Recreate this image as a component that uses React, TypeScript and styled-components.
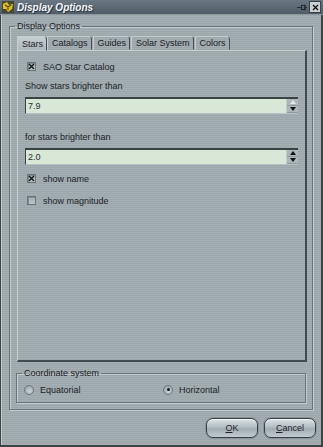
import React from "react";
import styled, { createGlobalStyle } from "styled-components";

const GlobalStyle = createGlobalStyle`
  html, body { margin: 0; padding: 0; background: #9ba6ac; }
  #root { width: 323px; height: 447px; }
`;

const stripes =
  "repeating-linear-gradient(to bottom, #a4aeb3 0px, #a4aeb3 1px, #9ca7ac 1px, #9ca7ac 2px)";

const Window = styled.div`
  box-sizing: border-box;
  width: 323px;
  height: 447px;
  display: flex;
  flex-direction: column;
  background: ${stripes};
  border-left: 1px solid #3d4448;
  border-right: 2px solid #3d4448;
  border-bottom: 2px solid #3d4448;
  font-family: "Liberation Sans", Arial, sans-serif;
  font-size: 9px;
  color: #1d2226;
`;

const TitleBar = styled.div`
  height: 15px;
  margin: 0 -2px 0 -1px;
  display: flex;
  align-items: center;
  padding: 0 2px;
  background: linear-gradient(#6a7783, #505d69);
  border-bottom: 1px solid #8d989e;
  box-sizing: border-box;
`;

const TitleText = styled.span`
  margin-left: 3px;
  font-size: 10px;
  font-weight: bold;
  font-style: italic;
  color: #f4f6f8;
  text-shadow: 1px 1px 0 #2e363d;
  flex: 1;
`;

const TitleButton = styled.div<{ $boxed?: boolean }>`
  width: 10px;
  height: 10px;
  margin-left: 1px;
  display: flex;
  align-items: center;
  justify-content: center;
  background: ${(p) => (p.$boxed ? "#c9cfd2" : "transparent")};
  border: 1px solid ${(p) => (p.$boxed ? "#3a4146" : "transparent")};
`;

const Body = styled.div`
  flex: 1;
  display: flex;
  flex-direction: column;
  padding: 0 8px 7px 8px;
  box-shadow: inset 1px 0 0 #c3cbcf;
`;

const Group = styled.fieldset`
  margin: 0;
  border: 1px solid #6b767c;
  box-shadow: 1px 1px 0 #c3cbcf, inset 1px 1px 0 #c3cbcf;
  min-width: 0;
`;

const OuterGroup = styled(Group)`
  flex: 1;
  margin-top: 6px;
  padding: 4px 5px 6px 7px;
  display: flex;
  flex-direction: column;
`;

const Legend = styled.legend`
  padding: 0 2px;
  margin-left: -2px;
  line-height: 10px;
  color: #1d2226;
`;

const TabBar = styled.div`
  display: flex;
  align-items: flex-end;
  height: 15px;
`;

const Tab = styled.div<{ $active?: boolean }>`
  height: ${(p) => (p.$active ? 15 : 14)}px;
  box-sizing: border-box;
  padding: 0 3px 0 4px;
  margin-right: ${(p) => (p.$active ? 0 : 1)}px;
  display: flex;
  align-items: center;
  border: 1px solid;
  border-color: #c6ced2 #474f54 transparent #c6ced2;
  border-top-right-radius: 4px;
  background: ${(p) =>
    p.$active ? "linear-gradient(#c6cfd3, #adb7bc)" : "transparent"};
  margin-bottom: ${(p) => (p.$active ? -1 : 0)}px;
  position: relative;
`;

const Panel = styled.div`
  flex: 1;
  display: flex;
  flex-direction: column;
  border-top: 1px solid #c6ced2;
  border-left: 1px solid #c6ced2;
  border-right: 2px solid #434b50;
  border-bottom: 2px solid #434b50;
  padding: 10px 7px 0 7px;
`;

const CheckRow = styled.label<{ $gap: number }>`
  display: flex;
  align-items: center;
  gap: 7px;
  height: 11px;
  padding-left: 2px;
  margin-top: ${(p) => p.$gap}px;
`;

const Box = styled.span`
  width: 9px;
  height: 9px;
  box-sizing: border-box;
  border: 1px solid #6a757b;
  background: linear-gradient(#a1acb1, #bcc5ca);
  box-shadow: inset 1px 1px 0 #808b91;
  display: flex;
  align-items: center;
  justify-content: center;
`;

const FieldLabel = styled.div<{ $gap: number }>`
  line-height: 10px;
  margin-top: ${(p) => p.$gap}px;
`;

const SpinBox = styled.div`
  margin-top: 6px;
  height: 17px;
  display: flex;
  box-sizing: border-box;
  border-top: 2px solid #3b4246;
  border-left: 1px solid #3b4246;
  border-bottom: 1px solid #b8c1c5;
  background: #d9e7d6;
`;

const SpinValue = styled.div`
  flex: 1;
  padding-left: 2px;
  display: flex;
  align-items: center;
  color: #283036;
`;

const SpinButtons = styled.div`
  width: 11px;
  display: flex;
  flex-direction: column;
  background: #adb7bc;
  border-left: 1px solid #c3cbcf;
`;

const SpinButton = styled.div`
  flex: 1;
  display: flex;
  align-items: center;
  justify-content: center;
  border-bottom: 1px solid #8f9a9f;
`;

const Arrow = styled.span<{ $up?: boolean; $disabled?: boolean }>`
  width: 0;
  height: 0;
  border-left: 3.5px solid transparent;
  border-right: 3.5px solid transparent;
  ${(p) =>
    p.$up
      ? `border-bottom: 4px solid ${p.$disabled ? "#e2e8ea" : "#111"};`
      : `border-top: 4px solid ${p.$disabled ? "#e2e8ea" : "#111"};`}
`;

const CoordGroup = styled(Group)`
  margin: 6px 1px 0 -1px;
  padding: 6px 7px 7px 7px;
  display: grid;
  grid-template-columns: 139px 1fr;
`;

const RadioRow = styled.label`
  display: flex;
  align-items: center;
  gap: 6px;
  height: 11px;
`;

const Radio = styled.span<{ $checked?: boolean }>`
  width: 10px;
  height: 10px;
  box-sizing: border-box;
  border-radius: 50%;
  border: 1px solid #6d787e;
  background: radial-gradient(circle at 60% 65%, #ccd3d7, #98a3a9 80%);
  display: flex;
  align-items: center;
  justify-content: center;
  &::after {
    content: "";
    width: 3px;
    height: 3px;
    border-radius: 50%;
    background: ${(p) => (p.$checked ? "#15191c" : "transparent")};
  }
`;

const ButtonRow = styled.div`
  display: flex;
  justify-content: flex-end;
  gap: 6px;
  margin: 8px -3px 0 0;
`;

const Button = styled.button`
  width: 52px;
  height: 20px;
  padding: 0;
  border: 1px solid #394045;
  border-radius: 7px;
  background: linear-gradient(#dde3e6, #b3bdc2 45%, #a2adb3 55%, #c1cacf);
  box-shadow: inset 0 1px 0 #f2f5f6, 0 0 0 1px #8a959b;
  font-family: inherit;
  font-size: 9px;
  color: #1d2226;
  u { text-decoration: underline; }
`;

const XMark = ({ size = 7 }: { size?: number }) => (
  <svg width={size} height={size} viewBox="0 0 7 7">
    <path d="M1 1 L6 6 M6 1 L1 6" stroke="#111" strokeWidth="1.3" />
  </svg>
);

const AppIcon = () => (
  <svg width="12" height="12" viewBox="0 0 12 12">
    <rect x="0" y="0" width="12" height="12" fill="#4a4834" />
    <path d="M1 3 L5 1 L7 4 L11 3 L10 8 L6 11 L4 8 L1 8 Z" fill="#e3bf1e" />
    <path d="M3 4 L6 6 L9 4 M6 6 L6 9" stroke="#4a4834" strokeWidth="1.2" fill="none" />
  </svg>
);

const PinIcon = () => (
  <svg width="12" height="9" viewBox="0 0 12 9">
    <path d="M0 4.5 H5" stroke="#1a1e21" strokeWidth="1" />
    <rect x="5.5" y="2" width="4" height="5" fill="none" stroke="#1a1e21" />
    <path d="M9.5 1 V8 M10.5 4.5 H12" stroke="#1a1e21" />
  </svg>
);

const Check = ({ checked, label, gap }: { checked: boolean; label: string; gap: number }) => (
  <CheckRow $gap={gap}>
    <Box>{checked && <XMark />}</Box>
    {label}
  </CheckRow>
);

const Spin = ({ value, upDisabled }: { value: string; upDisabled?: boolean }) => (
  <SpinBox>
    <SpinValue>{value}</SpinValue>
    <SpinButtons>
      <SpinButton>
        <Arrow $up $disabled={upDisabled} />
      </SpinButton>
      <SpinButton>
        <Arrow />
      </SpinButton>
    </SpinButtons>
  </SpinBox>
);

const tabs = ["Stars", "Catalogs", "Guides", "Solar System", "Colors"];

export default function App() {
  return (
    <>
      <GlobalStyle />
      <Window>
        <TitleBar>
          <AppIcon />
          <TitleText>Display Options</TitleText>
          <TitleButton>
            <PinIcon />
          </TitleButton>
          <TitleButton $boxed>
            <XMark size={7} />
          </TitleButton>
        </TitleBar>
        <Body>
          <OuterGroup>
            <Legend>Display Options</Legend>
            <TabBar>
              {tabs.map((t, i) => (
                <Tab key={t} $active={i === 0}>
                  {t}
                </Tab>
              ))}
            </TabBar>
            <Panel>
              <Check checked label="SAO Star Catalog" gap={0} />
              <FieldLabel $gap={9}>Show stars brighter than</FieldLabel>
              <Spin value="7.9" upDisabled />
              <FieldLabel $gap={18}>for stars brighter than</FieldLabel>
              <Spin value="2.0" />
              <Check checked label="show name" gap={8} />
              <Check checked={false} label="show magnitude" gap={11} />
            </Panel>
            <CoordGroup>
              <Legend>Coordinate system</Legend>
              <RadioRow>
                <Radio />
                Equatorial
              </RadioRow>
              <RadioRow>
                <Radio $checked />
                Horizontal
              </RadioRow>
            </CoordGroup>
          </OuterGroup>
          <ButtonRow>
            <Button>
              <u>O</u>K
            </Button>
            <Button>
              <u>C</u>ancel
            </Button>
          </ButtonRow>
        </Body>
      </Window>
    </>
  );
}
